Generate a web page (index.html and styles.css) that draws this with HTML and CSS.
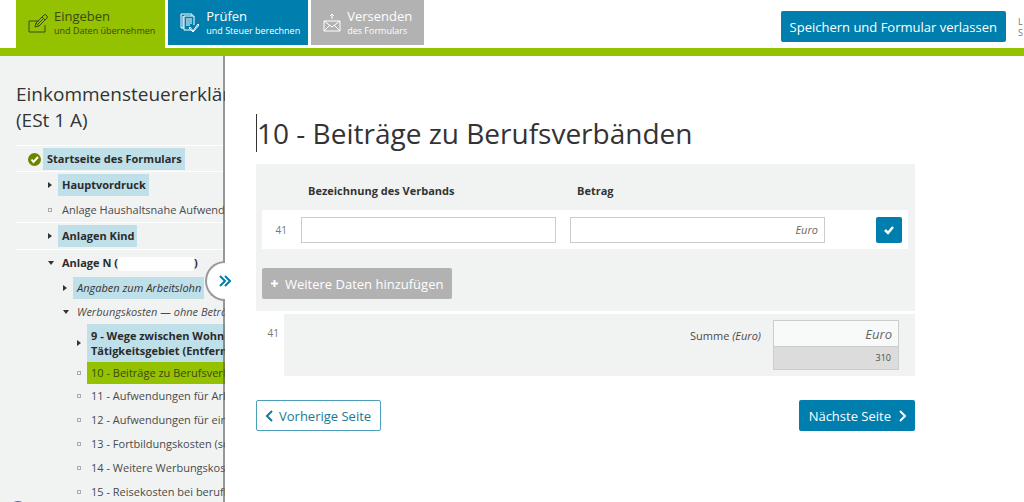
FILE: index.html
```html
<!DOCTYPE html>
<html lang="de">
<head>
<meta charset="utf-8">
<title>Einkommensteuererklärung – Beiträge zu Berufsverbänden</title>
<link rel="stylesheet" href="styles.css">
</head>
<body>
<header class="topbar">
  <nav class="steps">
    <a class="step step-active" href="#">
      <svg class="step-icon" width="20" height="20" viewBox="0 0 20 20"><path d="M11 8H1v11h16v-7M7 14l1-4 8-8q1-1 2 0l1 1q1 1 0 2l-8 8zM8 10l3 3M14 4l3 3M10 11l6-6"/></svg>
      <span><span class="step-title">Eingeben</span><span class="step-sub">und Daten übernehmen</span></span>
    </a>
    <a class="step step-check" href="#">
      <svg class="step-icon" width="20" height="20" viewBox="0 0 20 20"><path d="M4 15H1V1h11v2M11 17H4V3h10v9M6 6h6M6 8h6M6 10h6M6 12h4M10 14l3 4 5-7 1 1-6 7-4-4zM3 3v12"/></svg>
      <span><span class="step-title">Prüfen</span><span class="step-sub">und Steuer berechnen</span></span>
    </a>
    <a class="step step-send" href="#">
      <svg class="step-icon" width="18" height="20" viewBox="0 0 18 20"><path d="M1 8h16v10H1zM1 8l8 6 8-6M1 18l6-6M17 18l-6-6M9 6V1M7 3l2-2 2 2"/></svg>
      <span><span class="step-title">Versenden</span><span class="step-sub">des Formulars</span></span>
    </a>
  </nav>
  <div class="actions">
    <button class="btn btn-primary btn-save" type="button">Speichern und Formular verlassen</button>
    <span class="session">L<br>S</span>
  </div>
</header>
<div class="layout">
  <div class="side-wrap">
    <aside class="sidebar">
      <h2 class="form-title">Einkommensteuererklärung<br>(ESt 1 A)</h2>
      <ul class="tree">
        <li class="node node-root ruled"><svg class="done" width="13" height="13" viewBox="0 0 13 13"><circle cx="6.500" cy="6.500" r="6.500" fill="#6b8500"/><path d="M3.500 6.500l2 2.500 4.500-5" fill="none" stroke="#fff" stroke-width="2"/></svg><a class="label marked strong" href="#">Startseite des Formulars</a></li>
        <li class="node level-1 ruled"><i class="mark closed"></i><a class="label marked strong" href="#">Hauptvordruck</a></li>
        <li class="node level-1"><i class="mark leaf"></i><a class="label" href="#">Anlage Haushaltsnahe Aufwendungen</a></li>
        <li class="node level-1 ruled"><i class="mark closed"></i><a class="label marked strong" href="#">Anlagen Kind</a></li>
        <li class="node level-1 ruled"><i class="mark open"></i><a class="label strong" href="#">Anlage N (<span class="blank"></span>)</a></li>
        <li class="node level-2"><i class="mark closed"></i><a class="label marked slanted" href="#">Angaben zum Arbeitslohn</a></li>
        <li class="node level-2"><i class="mark open"></i><a class="label slanted" href="#">Werbungskosten — ohne Beträge</a></li>
        <li class="node level-3 tight"><i class="mark closed"></i><a class="label marked strong two-line" href="#">9 - Wege zwischen Wohnung und<br>Tätigkeitsgebiet (Entfernung)</a></li>
        <li class="node level-3 tight"><i class="mark leaf"></i><a class="label current" href="#">10 - Beiträge zu Berufsverbänden</a></li>
        <li class="node level-3"><i class="mark leaf"></i><a class="label" href="#">11 - Aufwendungen für Arbeitsmittel</a></li>
        <li class="node level-3"><i class="mark leaf"></i><a class="label" href="#">12 - Aufwendungen für ein Arbeitszimmer</a></li>
        <li class="node level-3"><i class="mark leaf"></i><a class="label" href="#">13 - Fortbildungskosten (soweit)</a></li>
        <li class="node level-3"><i class="mark leaf"></i><a class="label" href="#">14 - Weitere Werbungskosten</a></li>
        <li class="node level-3"><i class="mark leaf"></i><a class="label" href="#">15 - Reisekosten bei beruflich</a></li>
      </ul>
      <span class="help-circle"></span>
    </aside>
    <button class="toggle" type="button" aria-label="Navigation ausklappen"><svg width="12" height="12" viewBox="0 0 12 12"><path d="M1 1l5 5-5 5M6 1l5 5-5 5" fill="none" stroke="#007ead" stroke-width="2"/></svg></button>
  </div>
  <main class="content">
    <h1 class="page-title">10 - Beiträge zu Berufsverbänden</h1>
    <form>
      <section class="panel">
        <div class="grid-row heads">
          <label class="head" for="verband">Bezeichnung des Verbands</label>
          <label class="head" for="betrag">Betrag</label>
        </div>
        <div class="grid-row entry">
          <span class="line-no">41</span>
          <input class="field" id="verband" type="text">
          <input class="field amount" id="betrag" type="text" placeholder="Euro">
          <button class="btn-ok" type="button" aria-label="Übernehmen"><svg width="10" height="10" viewBox="0 0 10 10"><path d="M1 5l3 3 5-6" fill="none" stroke="#fff" stroke-width="2.500"/></svg></button>
        </div>
        <button class="btn btn-add" type="button"><svg width="7" height="7" viewBox="0 0 7 7"><path d="M3.500 0v7M0 3.500h7" stroke="#fff" stroke-width="2"/></svg>Weitere Daten hinzufügen</button>
      </section>
      <section class="sum">
        <span class="sum-no">41</span>
        <div class="sum-body">
          <label class="sum-label" for="summe">Summe <em>(Euro)</em></label>
          <div class="sum-box">
            <input class="sum-input" id="summe" type="text" placeholder="Euro">
            <div class="sum-code">310</div>
          </div>
        </div>
      </section>
      <div class="pager">
        <button class="btn btn-outline" type="button"><svg width="8" height="12" viewBox="0 0 8 12"><path d="M7 1L2 6l5 5" fill="none" stroke="currentColor" stroke-width="2"/></svg>Vorherige Seite</button>
        <button class="btn btn-primary btn-next" type="button">Nächste Seite<svg width="8" height="12" viewBox="0 0 8 12"><path d="M1 1l5 5-5 5" fill="none" stroke="currentColor" stroke-width="2"/></svg></button>
      </div>
    </form>
  </main>
</div>
</body>
</html>
```
FILE: styles.css
```css
*, *::before, *::after { box-sizing: border-box; }
body {
  margin: 0;
  height: 100vh;
  overflow: hidden;
  display: flex;
  flex-direction: column;
  background: #fff;
  color: #333;
  font-family: "Open Sans", "Noto Sans", sans-serif;
  font-size: 11px;
}
a { color: inherit; text-decoration: none; }
button, input { font-family: inherit; }

.topbar {
  display: flex;
  justify-content: space-between;
  border-bottom: 8px solid #94c100;
  height: 56px;
  flex: none;
  padding-left: 16px;
}
.steps { display: flex; gap: 3px; }
.step {
  display: flex;
  align-items: flex-start;
  gap: 6px;
  height: 45px;
  padding: 8px 12px 0 12px;
  color: #fff;
  white-space: nowrap;
}
.step-active { background: #94c100; color: #3c4a12; height: 48px; padding-right: 10px; }
.step-check { background: #007ead; padding-right: 8px; }
.step-send { background: #b2b2b2; }
.step-icon { margin-top: 5px; fill: none; stroke: currentColor; stroke-width: 1; }
.step-title { display: block; font-size: 13px; line-height: 16px; font-weight: 500; }
.step-sub { display: block; font-size: 9px; line-height: 13px; font-weight: 500; }
.actions { display: flex; gap: 12px; padding-top: 11px; }
.session { width: 6px; overflow: hidden; padding-top: 5px; font-size: 9px; line-height: 11px; color: #777; }

.btn {
  display: inline-flex;
  align-items: center;
  height: 31px;
  padding: 0 9px;
  border: 0;
  border-radius: 2px;
  font-size: 13px;
  white-space: nowrap;
}
.btn-primary { background: #007ead; color: #fff; }
.btn-outline { gap: 6px; padding: 0 9px 0 8px; border: 1px solid #4d9fbd; background: #fff; color: #1c7893; }
.btn-next { gap: 8px; padding-left: 10px; padding-right: 8px; }
.btn-add { gap: 7px; margin: 19px 0 12px 6px; padding: 0 9px; background: #b2b2b2; color: #fff; }

.layout { display: flex; flex: 1; min-height: 0; }
.side-wrap { position: relative; flex: none; width: 225px; display: flex; }
.side-wrap::after {
  content: "";
  position: absolute;
  top: 0;
  right: 0;
  bottom: 0;
  width: 2px;
  background: rgba(90, 90, 90, 0.6);
}
.sidebar {
  flex: 1;
  min-width: 0;
  overflow: hidden;
  padding: 25px 0 0 16px;
  background: #f1f3f3;
}
.form-title { margin: 0 0 12px; font-size: 19px; line-height: 26px; font-weight: 400; white-space: nowrap; }
.tree { margin: 0; padding: 0; list-style: none; }
.node { display: flex; align-items: center; padding: 1px 0; white-space: nowrap; }
.ruled { border-top: 1px solid #fff; padding: 2px 0; }
.node-root { padding: 2px 0 1px 12px; }
.level-1 { padding-left: 28px; }
.level-2 { padding-left: 43px; }
.level-3 { padding-left: 57px; }
.tight { padding-top: 0; padding-bottom: 0; }
.label { padding: 0 3px 0 4px; line-height: 22px; color: #4a4a4a; }
.marked { background: #bfdfe9; color: #333; }
.strong { font-weight: 700; color: #2b2b2b; }
.slanted { font-style: italic; }
.two-line { padding: 4px; line-height: 15px; }
.current { background: #94c100; color: #3c4a12; flex: 1 0 auto; }
.blank { display: inline-block; width: 76px; height: 14px; background: #fff; vertical-align: middle; }
.done { margin-right: 2px; }
.mark { flex: none; width: 14px; height: 10px; display: flex; align-items: center; padding-left: 4px; }
.mark::before { content: ""; }
.closed::before { border: 3px solid transparent; border-left: 4px solid #333; border-right: 0; }
.open::before { border: 3px solid transparent; border-top: 4px solid #333; border-bottom: 0; }
.leaf::before { width: 4px; height: 4px; border: 1px solid #aaa; }
.help-circle { position: absolute; left: 9px; bottom: -17px; width: 18px; height: 18px; border: 1px solid #4a6590; border-radius: 50%; }
.toggle {
  position: absolute;
  z-index: 1;
  top: 205px;
  right: 0;
  width: 20px;
  height: 40px;
  padding: 0 0 0 12px;
  border: 2px solid #999;
  border-right: 0;
  border-radius: 20px 0 0 20px;
  background: #fff;
  display: flex;
  align-items: center;
}
.toggle svg { flex: none; }

.content { flex: 1; min-width: 0; padding: 58px 109px 0 31px; }
.page-title { margin: 0 0 12px; border-left: 1px solid #333; font-size: 28px; line-height: 38px; font-weight: 400; }
.panel { background: #f1f3f3; border-top: 1px solid #f1f3f3; }
.grid-row {
  display: grid;
  grid-template-columns: 25px minmax(0, 255fr) minmax(0, 255fr) 23px 26px;
  column-gap: 14px;
  align-items: center;
  margin: 0 7px 0 6px;
  padding-right: 6px;
}
.heads { height: 45px; padding-top: 6px; }
.head { padding-left: 7px; font-weight: 700; }
.head:first-child { grid-column: 2; }
.entry { height: 39px; background: #fff; }
.line-no { text-align: right; font-size: 10px; color: #777; }
.field { width: 100%; height: 26px; padding: 0 6px; border: 1px solid #ccc; background: #fff; font-size: 11px; }
.amount { text-align: right; font-style: italic; }
input::placeholder { color: #666; opacity: 1; }
.btn-ok { grid-column: 5; display: grid; place-items: center; width: 26px; height: 26px; padding: 0; border: 0; border-radius: 2px; background: #007ead; }

.sum { display: flex; margin-top: 3px; }
.sum-no { width: 28px; flex: none; padding: 12px 5px 0 0; text-align: right; font-size: 10px; color: #777; }
.sum-body { flex: 1; display: flex; justify-content: flex-end; gap: 12px; padding: 6px 16px 6px; background: #f1f3f3; }
.sum-label { padding-top: 8px; color: #4a4a4a; }
.sum-box { width: 126px; border: 1px solid #ccc; background: #dcdcdc; }
.sum-input { display: block; width: 100%; height: 26px; padding: 0 6px; border: 0; border-bottom: 1px solid #ccc; background: #f8f9f9; font-size: 13px; font-style: italic; text-align: right; }
.sum-code { padding-right: 7px; font-size: 9px; line-height: 22px; text-align: right; color: #4a4a4a; }
.pager { display: flex; justify-content: space-between; margin-top: 24px; }
```
